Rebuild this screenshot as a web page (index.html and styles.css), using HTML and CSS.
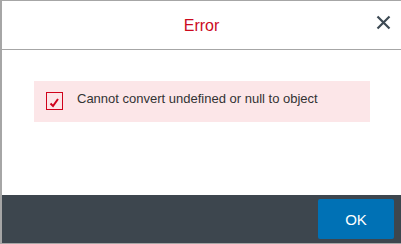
FILE: index.html
```html
<!DOCTYPE html>
<html>
<head>
<meta charset="utf-8">
<link rel="stylesheet" href="styles.css">
</head>
<body>
<div class="dialog">
  <div class="header">
    <span class="title">Error</span>
    <button class="close" aria-label="Close">
      <svg width="15" height="15" viewBox="0 0 15 15"><path d="M1.5 1.5 L13.5 13.5 M13.5 1.5 L1.5 13.5" stroke="#3e4a54" stroke-width="2.2" fill="none"/></svg>
    </button>
  </div>
  <div class="body">
    <div class="message">
      <span class="check">
        <svg width="11" height="10" viewBox="0 0 11 10"><path d="M1.5 5.5 L4 8 L9 1" stroke="#d0021b" stroke-width="2" fill="none"/></svg>
      </span>
      <span class="text">Cannot convert undefined or null to object</span>
    </div>
  </div>
  <div class="footer">
    <button class="ok">OK</button>
  </div>
</div>
</body>
</html>
```

FILE: styles.css
```css
html, body {
  margin: 0;
  padding: 0;
  background: #fff;
}
.dialog {
  width: 399px;
  height: 242px;
  border-left: 2px solid #a6a6a6;
  border-top: 1px solid #a6a6a6;
  border-bottom: 1px solid #a6a6a6;
  display: flex;
  flex-direction: column;
  font-family: "Liberation Sans", Arial, sans-serif;
}
.header {
  position: relative;
  height: 48px;
  border-bottom: 1px solid #a6a6a6;
  display: flex;
  align-items: center;
  justify-content: center;
}
.title {
  color: #cc0a1e;
  font-size: 16px;
  margin-top: 1px;
}
.close {
  position: absolute;
  right: 9px;
  top: 13px;
  width: 17px;
  height: 17px;
  padding: 0;
  border: none;
  background: none;
  display: flex;
  align-items: center;
  justify-content: center;
}
.body {
  flex: 1;
  padding: 31px 31px 0 32px;
}
.message {
  height: 41px;
  background: #fce6e8;
  display: flex;
  align-items: center;
  padding-left: 12px;
}
.check {
  width: 15px;
  height: 15px;
  border: 1px solid #d0021b;
  display: flex;
  align-items: flex-end;
  justify-content: center;
  padding-bottom: 1px;
  box-sizing: content-box;
  margin-top: -1px;
}
.text {
  margin-left: 14px;
  font-size: 13px;
  color: #333;
  margin-top: -6px;
}
.footer {
  height: 48px;
  background: #3d464e;
  display: flex;
  justify-content: flex-end;
  align-items: center;
  padding-right: 7px;
}
.ok {
  width: 76px;
  height: 40px;
  background: #0071b5;
  color: #fff;
  border: none;
  border-radius: 2px;
  font-family: "Liberation Sans", Arial, sans-serif;
  font-size: 15px;
  padding: 0;
}
```
